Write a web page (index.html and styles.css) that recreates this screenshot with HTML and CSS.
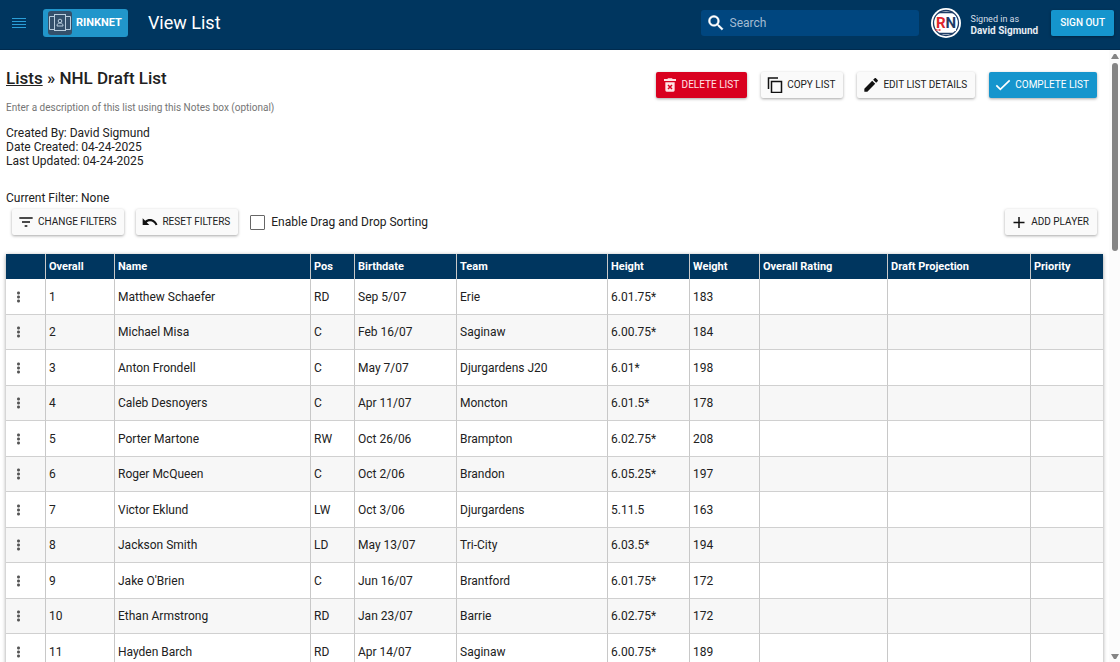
FILE: index.html
```html
<!DOCTYPE html>
<html lang="en">
<head>
    <meta charset="UTF-8">
    <meta name="viewport" content="width=device-width, initial-scale=1.0">
    <title>View List - RinkNet</title>
    <link rel="stylesheet" href="styles.css">
</head>
<body>
    <header class="topbar">
        <button class="menu-btn" type="button" aria-label="Menu">
            <svg width="14" height="10" viewBox="0 0 14 10"><path d="M0 .5h14M0 3.5h14M0 6.5h14M0 9.5h14" stroke="#2b9fd8"/></svg>
        </button>
        <a class="logo" href="#">
            <svg width="24" height="24" viewBox="0 0 24 24">
                <rect width="24" height="24" rx="3" fill="#34506b"/>
                <g fill="none" stroke="#b9cddd">
                    <path d="M6.5 5.5H1.5v13h5M17.500 5.500h5v13h-5"/>
                    <rect x="6.500" y="3.500" width="11" height="16"/>
                    <circle cx="12" cy="10" r="1.800"/>
                    <path d="M9 15c0-2 1-3 3-3s3 1 3 3z"/>
                </g>
            </svg>
            <span>RINKNET</span>
        </a>
        <span class="page-title">View List</span>
        <label class="search">
            <svg width="20" height="20" viewBox="0 0 24 24" fill="#fff"><path d="M15.500 14h-.79l-.28-.27A6.470 6.470 0 0 0 16 9.500 6.500 6.500 0 1 0 9.500 16c1.610 0 3.090-.59 4.230-1.570l.27.28v.79l5 4.990L20.490 19l-4.990-5zm-6 0C7.010 14 5 11.990 5 9.500S7.010 5 9.500 5 14 7.010 14 9.500 11.990 14 9.500 14z" stroke="#fff" stroke-width=".6"/></svg>
            <input type="text" placeholder="Search" aria-label="Search">
        </label>
        <svg class="avatar" width="30" height="30" viewBox="0 0 30 30">
            <circle cx="15" cy="15" r="15" fill="#fff"/>
            <circle cx="15" cy="15" r="12.500" fill="none" stroke="#1d3c66" stroke-width="1.300"/>
            <path d="M5 8h20v15H5z" fill="#fff"/>
            <path d="M8 4.500h14M8 25.500h14" stroke="#1d3c66" stroke-width="1.500"/>
            <text x="5" y="20"><tspan fill="#e0262c">R</tspan><tspan fill="#1d3c66">N</tspan></text>
            <path d="M4.500 22h6" stroke="#e0262c" stroke-width="1.500" stroke-dasharray="2 1"/>
        </svg>
        <div class="user">
            <div>Signed in as</div>
            <strong>David Sigmund</strong>
        </div>
        <button class="btn btn-blue sign-out" type="button">Sign out</button>
    </header>

    <div class="page">
        <main class="content">
            <section class="list-head">
                <div>
                    <h1><a href="#">Lists</a> » NHL Draft List</h1>
                    <p class="notes">Enter a description of this list using this Notes box (optional)</p>
                </div>
                <div class="actions">
                    <button class="btn btn-red" type="button">
                        <svg width="16" height="16" viewBox="0 0 24 24" fill="#ffe3e6"><path d="M5 8v12q0 2 2 2h10q2 0 2-2V8zM3 3h5l1-1h6l1 1h5v3H3z"/><path d="M9 12l6 6M15 12l-6 6" stroke="#d9001f" stroke-width="2.200"/></svg>
                        Delete list
                    </button>
                    <button class="btn" type="button">
                        <svg width="16" height="16" viewBox="0 0 16 16" fill="none" stroke="#111" stroke-width="1.500"><path d="M1.500 12V1H11M4.500 4.500h10v11h-10z"/></svg>
                        Copy list
                    </button>
                    <button class="btn" type="button">
                        <svg width="16" height="16" viewBox="0 0 24 24" fill="#111"><path d="M2 17.500V22h4.500L18.300 10.200l-4.500-4.500zM22 6.500c.6-.6.6-1.300 0-1.900l-2.600-2.600c-.6-.6-1.300-.6-1.900 0l-2.300 2.300 4.500 4.500z"/></svg>
                        Edit list details
                    </button>
                    <button class="btn btn-blue" type="button">
                        <svg width="16" height="16" viewBox="0 0 24 24" fill="none" stroke="#fff" stroke-width="2.500"><path d="M2 12.500l6 6L22 5"/></svg>
                        Complete list
                    </button>
                </div>
            </section>

            <div class="meta">
                <div>Created By: David Sigmund</div>
                <div>Date Created: 04-24-2025</div>
                <div>Last Updated: 04-24-2025</div>
            </div>

            <div class="current-filter">Current Filter: None</div>
            <div class="toolbar">
                <button class="btn" type="button">
                    <svg width="16" height="16" viewBox="0 0 24 24" stroke="#111" stroke-width="2.200"><path d="M2 6h20M6 12h12M10 18h4"/></svg>
                    Change filters
                </button>
                <button class="btn" type="button">
                    <svg width="16" height="16" viewBox="0 0 24 24" fill="#111"><path d="M12 7.500c-2.800 0-5.300 1-7.200 2.700L1 6.500v10h10l-3.900-3.900C8.500 11.400 10.200 10.700 12 10.700c4 0 7.200 2.500 8.400 6.300l2.800-.9C21.600 11.200 17.300 7.500 12 7.500z"/></svg>
                    Reset filters
                </button>
                <label class="drag-toggle">
                    <input type="checkbox">
                    Enable Drag and Drop Sorting
                </label>
                <button class="btn add-player" type="button">
                    <svg width="16" height="16" viewBox="0 0 16 16" stroke="#111" stroke-width="1.500"><path d="M8 3v11M2.500 8.500h11"/></svg>
                    Add player
                </button>
            </div>

            <table class="players">
                <colgroup>
                    <col class="c-menu"><col class="c-overall"><col><col class="c-pos"><col class="c-birth"><col class="c-team">
                    <col class="c-height"><col class="c-weight"><col class="c-rating"><col class="c-proj"><col class="c-priority">
                </colgroup>
                <thead>
                    <tr><th></th><th>Overall</th><th>Name</th><th>Pos</th><th>Birthdate</th><th>Team</th><th>Height</th><th>Weight</th><th>Overall Rating</th><th>Draft Projection</th><th>Priority</th></tr>
                </thead>
                <tbody>
                    <tr><td><button class="dots" type="button" aria-label="Row menu"></button></td><td>1</td><td>Matthew Schaefer</td><td>RD</td><td>Sep 5/07</td><td>Erie</td><td>6.01.75*</td><td>183</td><td></td><td></td><td></td></tr>
                    <tr><td><button class="dots" type="button" aria-label="Row menu"></button></td><td>2</td><td>Michael Misa</td><td>C</td><td>Feb 16/07</td><td>Saginaw</td><td>6.00.75*</td><td>184</td><td></td><td></td><td></td></tr>
                    <tr><td><button class="dots" type="button" aria-label="Row menu"></button></td><td>3</td><td>Anton Frondell</td><td>C</td><td>May 7/07</td><td>Djurgardens J20</td><td>6.01*</td><td>198</td><td></td><td></td><td></td></tr>
                    <tr><td><button class="dots" type="button" aria-label="Row menu"></button></td><td>4</td><td>Caleb Desnoyers</td><td>C</td><td>Apr 11/07</td><td>Moncton</td><td>6.01.5*</td><td>178</td><td></td><td></td><td></td></tr>
                    <tr><td><button class="dots" type="button" aria-label="Row menu"></button></td><td>5</td><td>Porter Martone</td><td>RW</td><td>Oct 26/06</td><td>Brampton</td><td>6.02.75*</td><td>208</td><td></td><td></td><td></td></tr>
                    <tr><td><button class="dots" type="button" aria-label="Row menu"></button></td><td>6</td><td>Roger McQueen</td><td>C</td><td>Oct 2/06</td><td>Brandon</td><td>6.05.25*</td><td>197</td><td></td><td></td><td></td></tr>
                    <tr><td><button class="dots" type="button" aria-label="Row menu"></button></td><td>7</td><td>Victor Eklund</td><td>LW</td><td>Oct 3/06</td><td>Djurgardens</td><td>5.11.5</td><td>163</td><td></td><td></td><td></td></tr>
                    <tr><td><button class="dots" type="button" aria-label="Row menu"></button></td><td>8</td><td>Jackson Smith</td><td>LD</td><td>May 13/07</td><td>Tri-City</td><td>6.03.5*</td><td>194</td><td></td><td></td><td></td></tr>
                    <tr><td><button class="dots" type="button" aria-label="Row menu"></button></td><td>9</td><td>Jake O'Brien</td><td>C</td><td>Jun 16/07</td><td>Brantford</td><td>6.01.75*</td><td>172</td><td></td><td></td><td></td></tr>
                    <tr><td><button class="dots" type="button" aria-label="Row menu"></button></td><td>10</td><td>Ethan Armstrong</td><td>RD</td><td>Jan 23/07</td><td>Barrie</td><td>6.02.75*</td><td>172</td><td></td><td></td><td></td></tr>
                    <tr><td><button class="dots" type="button" aria-label="Row menu"></button></td><td>11</td><td>Hayden Barch</td><td>RD</td><td>Apr 14/07</td><td>Saginaw</td><td>6.00.75*</td><td>189</td><td></td><td></td><td></td></tr>
                </tbody>
            </table>
        </main>
        <div class="scrollbar" aria-hidden="true">
            <svg width="8" height="5" viewBox="0 0 8 5" fill="#858585"><path d="M0 5l3-5h2l3 5z"/></svg>
            <div class="track"><div class="thumb"></div></div>
            <svg width="8" height="5" viewBox="0 0 8 5" fill="#858585"><path d="M0 0l3 5h2l3-5z"/></svg>
        </div>
    </div>
</body>
</html>
```
FILE: styles.css
```css
* {
    box-sizing: border-box;
}
body {
    margin: 0;
    height: 100vh;
    display: flex;
    flex-direction: column;
    overflow: hidden;
    background: #fff;
    color: #212121;
    font-family: Roboto, sans-serif;
    font-size: 12px;
    line-height: 14px;
}
button, input {
    font: inherit;
}

/* top bar */
.topbar {
    flex: none;
    display: flex;
    align-items: center;
    height: 50px;
    padding: 0 6px 4px 12px;
    background: #00365f;
    border-bottom: 1px solid #002b4e;
    color: #fff;
}
.menu-btn {
    display: flex;
    padding: 0;
    border: none;
    background: none;
    cursor: pointer;
}
.logo {
    display: flex;
    align-items: center;
    gap: 4px;
    height: 28px;
    margin-left: 17px;
    padding: 0 6px 0 5px;
    background: #2196cb;
    border-radius: 3px;
    color: #fff;
    font-size: 11px;
    font-weight: 700;
    text-decoration: none;
}
.page-title {
    margin-left: 20px;
    font-size: 18px;
    line-height: 24px;
}
.search {
    display: flex;
    align-items: center;
    gap: 4px;
    width: 218px;
    height: 26px;
    margin-left: auto;
    padding-left: 5px;
    background: #00467f;
    border-radius: 3px;
}
.search input {
    flex: 1;
    min-width: 0;
    padding: 0;
    border: none;
    outline: none;
    background: none;
    color: #fff;
}
.search input::placeholder {
    color: #a3bcd3;
}
.avatar {
    margin: 0 10px 0 12px;
    font-size: 15px;
    font-weight: 700;
}
.user {
    margin-right: 13px;
    padding-top: 5px;
    font-size: 9px;
    line-height: 12px;
    color: #d5dfe8;
}
.user strong {
    font-size: 10px;
    color: #e6edf3;
}

/* buttons */
.btn {
    display: flex;
    align-items: center;
    gap: 4px;
    height: 26px;
    padding: 0 8px 0 6px;
    border: none;
    border-radius: 2px;
    background: #fafafa;
    color: #212121;
    font-size: 10px;
    text-transform: uppercase;
    white-space: nowrap;
    box-shadow: 0 1px 3px rgba(0,0,0,0.35);
    cursor: pointer;
}
.btn-red {
    background: #d9001f;
    color: #ffe3e6;
}
.btn-blue {
    background: #1595cd;
    color: #fff;
}
.sign-out {
    padding: 0 9px;
    font-weight: 500;
}

/* page */
.page {
    flex: 1;
    min-height: 0;
    display: flex;
}
.content {
    flex: 1;
    min-width: 0;
    padding: 18px 6px 0;
    overflow: hidden;
}
.list-head {
    display: flex;
    justify-content: space-between;
}
h1 {
    margin: 0;
    font-size: 17px;
    font-weight: 500;
    line-height: 20px;
}
h1 a {
    color: inherit;
}
.notes {
    margin: 13px 0 0;
    font-size: 10px;
    color: #757575;
}
.actions {
    display: flex;
    gap: 14px;
    padding: 4px 6px 0 0;
}
.meta {
    margin-top: 11px;
}
.current-filter {
    margin-top: 23px;
}
.toolbar {
    display: flex;
    align-items: center;
    gap: 12px;
    margin-top: 4px;
    padding: 0 6px;
}
.drag-toggle {
    display: flex;
    align-items: center;
    gap: 6px;
}
.drag-toggle input {
    appearance: none;
    width: 15px;
    height: 15px;
    margin: 0;
    border: 1px solid #666;
    border-radius: 1px;
    background: #fff;
}
.add-player {
    margin-left: auto;
}

/* players table */
.players {
    width: 100%;
    margin-top: 19px;
    table-layout: fixed;
    border-collapse: separate;
    border-spacing: 0;
    box-shadow: 0 1px 4px rgba(0,0,0,0.4);
}
.c-menu { width: 40px; }
.c-overall { width: 69px; }
.c-pos { width: 44px; }
.c-birth { width: 102px; }
.c-team { width: 151px; }
.c-height { width: 82px; }
.c-weight { width: 70px; }
.c-rating { width: 128px; }
.c-proj { width: 143px; }
.c-priority { width: 72px; }
.players th,
.players td {
    padding: 0 3px;
    border-right: 1px solid #c8c8c8;
    text-align: left;
    white-space: nowrap;
}
.players th:last-child,
.players td:last-child {
    border-right: none;
}
.players th {
    height: 25px;
    background: #00365f;
    color: #fff;
    font-size: 11px;
    font-weight: 700;
}
.players td {
    height: 36px;
    border-bottom: 1px solid #d0d0d0;
    background: #fff;
}
.players tr:nth-child(even) td {
    height: 35px;
    background: #f7f7f7;
}
.dots {
    display: block;
    width: 3px;
    height: 12px;
    margin-left: 8px;
    padding: 0;
    border: none;
    background: radial-gradient(circle, #555 1px, transparent 2px) 0 0 / 3px 4px;
    cursor: pointer;
}

/* scrollbar */
.scrollbar {
    flex: none;
    display: flex;
    flex-direction: column;
    align-items: center;
    gap: 4px;
    width: 11px;
    padding: 4px 0 3px;
    background: #fcfcfc;
}
.track {
    flex: 1;
    width: 6px;
}
.thumb {
    height: 32%;
    border-radius: 3px;
    background: #858585;
}
```
